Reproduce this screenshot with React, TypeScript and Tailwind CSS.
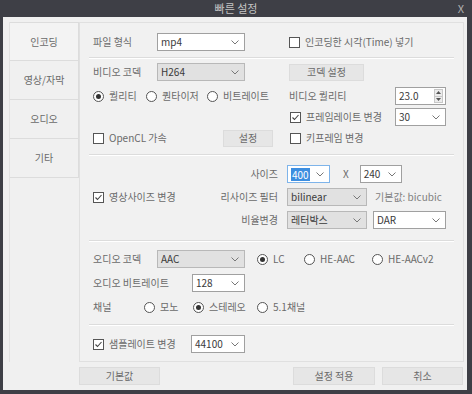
import React from 'react';

const Chevron = () => (
  <svg width="8" height="5" viewBox="0 0 8 5" className="shrink-0">
    <polyline points="0.5,0.5 4,4 7.5,0.5" fill="none" stroke="#777" strokeWidth="1" />
  </svg>
);

const Select = ({ value, w, gray, focus }: { value: string; w: string; gray?: boolean; focus?: boolean }) => (
  <div
    className={`h-[18px] ${w} flex items-center justify-between pl-[3px] pr-[5px] border text-[#3a3a3a] ${
      gray ? 'bg-[#e1e1e1] border-[#b8b8b8]' : focus ? 'bg-white border-[#7eb4ea]' : 'bg-white border-[#a0a0a0]'
    }`}
  >
    {focus ? <span className="bg-[#3d8ee0] text-white px-[1px] leading-[13px]">{value}</span> : <span>{value}</span>}
    <Chevron />
  </div>
);

const Check = ({ checked, label }: { checked?: boolean; label: string }) => (
  <div className="flex items-center gap-[5px]">
    <div className="w-[11px] h-[11px] border border-[#555] bg-white flex items-center justify-center">
      {checked && (
        <svg width="9" height="9" viewBox="0 0 9 9">
          <polyline points="1.5,4.5 3.5,6.5 7.5,2" fill="none" stroke="#444" strokeWidth="1.1" />
        </svg>
      )}
    </div>
    <span>{label}</span>
  </div>
);

const Radio = ({ checked, label, w }: { checked?: boolean; label: string; w?: string }) => (
  <div className={`flex items-center gap-[5px] ${w ?? ''}`}>
    <div className="w-[11px] h-[11px] rounded-full border border-[#555] bg-white flex items-center justify-center">
      {checked && <div className="w-[5px] h-[5px] rounded-full bg-[#333]" />}
    </div>
    <span>{label}</span>
  </div>
);

const Button = ({ label, w, h = 'h-[17px]' }: { label: string; w: string; h?: string }) => (
  <div className={`${w} ${h} flex items-center justify-center bg-[#e6e6e6] border border-[#dcdcdc]`}>{label}</div>
);

const Sep = () => <div className="mx-[9px] h-[2px] border-t border-[#dcdcdc] border-b border-b-white" />;

const tabs = ['인코딩', '영상/자막', '오디오', '기타'];

export default function App() {
  return (
    <div className="w-[472px] h-[394px] bg-[#3e3f46] flex flex-col font-['Noto_Sans_CJK_KR',sans-serif] text-[10px] text-[#6a6a6a] leading-none">
      <div className="h-[17px] relative flex items-center justify-center text-[11px] text-[#c4c4c4]">
        빠른 설정
        <span className="absolute right-[8px] top-[3px] text-[11px] text-[#b0b0b0]">X</span>
      </div>
      <div className="flex-1 ml-[3px] mr-[5px] mb-[4px] bg-[#f0f0f0] flex flex-col">
        <div className="flex pt-[5px] pl-[6px] pr-[3px]">
          {/* tabs */}
          <div className="w-[70px] flex flex-col border-l border-[#e2e2e2]">
            {tabs.map((t, i) => (
              <div
                key={t}
                className={`h-[39px] flex items-center justify-center border-b border-r border-[#dcdcdc] ${
                  i === 0 ? 'border-t bg-[#f3f3f3]' : ''
                }`}
              >
                {t}
              </div>
            ))}
          </div>
          {/* panel */}
          <div className="w-[385px] h-[340px] border border-[#e0e0e0] bg-[#f1f1f1] flex flex-col">
            {/* section 1 */}
            <div className="h-[34px] pt-[10px] pl-[13px]">
              <div className="h-[18px] flex items-center">
                <span className="w-[64px]">파일 형식</span>
                <Select value="mp4" w="w-[88px]" />
                <div className="ml-[44px]">
                  <Check label="인코딩한 시각(Time) 넣기" />
                </div>
              </div>
            </div>
            <Sep />
            {/* section 2 */}
            <div className="h-[95px] pt-[4px] pl-[13px] flex flex-col">
              <div className="h-[18px] flex items-center">
                <div className="w-[196px] flex items-center">
                  <span className="w-[64px]">비디오 코덱</span>
                  <Select value="H264" w="w-[88px]" gray />
                </div>
                <Button label="코덱 설정" w="w-[75px]" />
              </div>
              <div className="h-[18px] mt-[6px] flex items-center">
                <div className="w-[196px] flex items-center">
                  <Radio checked label="퀄리티" w="w-[53px]" />
                  <Radio label="퀀타이저" w="w-[61px]" />
                  <Radio label="비트레이트" />
                </div>
                <span className="w-[106px]">비디오 퀄리티</span>
                <div className="w-[51px] h-[18px] bg-white border border-[#a0a0a0] flex items-center justify-between pl-[3px] pr-[2px] text-[#3a3a3a]">
                  <span>23.0</span>
                  <div className="w-[9px] h-[14px] flex flex-col border border-[#c8c8c8] bg-[#ececec]">
                    <div className="flex-1 flex items-center justify-center">
                      <svg width="5" height="3" viewBox="0 0 5 3"><polygon points="0,3 2.5,0 5,3" fill="#555" /></svg>
                    </div>
                    <div className="flex-1 flex items-center justify-center border-t border-[#c8c8c8]">
                      <svg width="5" height="3" viewBox="0 0 5 3"><polygon points="0,0 2.5,3 5,0" fill="#555" /></svg>
                    </div>
                  </div>
                </div>
              </div>
              <div className="h-[18px] mt-[3px] flex items-center">
                <div className="w-[197px]" />
                <div className="w-[105px]">
                  <Check checked label="프레임레이트 변경" />
                </div>
                <Select value="30" w="w-[51px]" />
              </div>
              <div className="h-[18px] mt-[3px] flex items-center">
                <div className="w-[196px] flex items-center">
                  <div className="w-[130px]">
                    <Check label="OpenCL 가속" />
                  </div>
                  <Button label="설정" w="w-[50px]" />
                </div>
                <div className="ml-[1px]">
                  <Check label="키프레임 변경" />
                </div>
              </div>
            </div>
            <Sep />
            {/* section 3 */}
            <div className="h-[84px] pt-[9px] pl-[13px] flex flex-col">
              <div className="h-[18px] flex items-center">
                <div className="w-[185px] flex justify-end">사이즈</div>
                <div className="ml-[9px]">
                  <Select value="400" w="w-[43px]" focus />
                </div>
                <span className="ml-[13px] mr-[11px]">X</span>
                <Select value="240" w="w-[42px]" />
              </div>
              <div className="h-[18px] mt-[5px] flex items-center">
                <div className="w-[185px] flex items-center justify-between">
                  <Check checked label="영상사이즈 변경" />
                  <span>리사이즈 필터</span>
                </div>
                <div className="ml-[9px]">
                  <Select value="bilinear" w="w-[80px]" gray />
                </div>
                <span className="ml-[8px] text-[#808080]">기본값: bicubic</span>
              </div>
              <div className="h-[18px] mt-[5px] flex items-center">
                <div className="w-[185px] flex justify-end">비율변경</div>
                <div className="ml-[9px]">
                  <Select value="레터박스" w="w-[80px]" gray />
                </div>
                <div className="ml-[6px]">
                  <Select value="DAR" w="w-[73px]" />
                </div>
              </div>
            </div>
            <Sep />
            {/* section 4 */}
            <div className="h-[82px] pt-[8px] pl-[13px] flex flex-col">
              <div className="h-[18px] flex items-center">
                <span className="w-[64px]">오디오 코덱</span>
                <Select value="AAC" w="w-[88px]" gray />
                <div className="ml-[12px] flex items-center">
                  <Radio checked label="LC" w="w-[47px]" />
                  <Radio label="HE-AAC" w="w-[68px]" />
                  <Radio label="HE-AACv2" />
                </div>
              </div>
              <div className="h-[18px] mt-[6px] flex items-center">
                <span className="w-[99px]">오디오 비트레이트</span>
                <Select value="128" w="w-[53px]" />
              </div>
              <div className="h-[18px] mt-[6px] flex items-center">
                <span className="w-[51px]">채널</span>
                <Radio label="모노" w="w-[49px]" />
                <Radio checked label="스테레오" w="w-[64px]" />
                <Radio label="5.1채널" />
              </div>
            </div>
            <Sep />
            {/* section 5 */}
            <div className="pt-[9px] pl-[13px]">
              <div className="h-[18px] flex items-center">
                <div className="w-[98px]">
                  <Check checked label="샘플레이트 변경" />
                </div>
                <Select value="44100" w="w-[54px]" />
              </div>
            </div>
          </div>
        </div>
        {/* buttons */}
        <div className="flex items-center mt-[5px] pl-[76px] pr-[4px]">
          <Button label="기본값" w="w-[81px]" h="h-[18px]" />
          <div className="ml-auto flex gap-[7px]">
            <Button label="설정 적용" w="w-[82px]" h="h-[18px]" />
            <Button label="취소" w="w-[81px]" h="h-[18px]" />
          </div>
        </div>
      </div>
    </div>
  );
}
